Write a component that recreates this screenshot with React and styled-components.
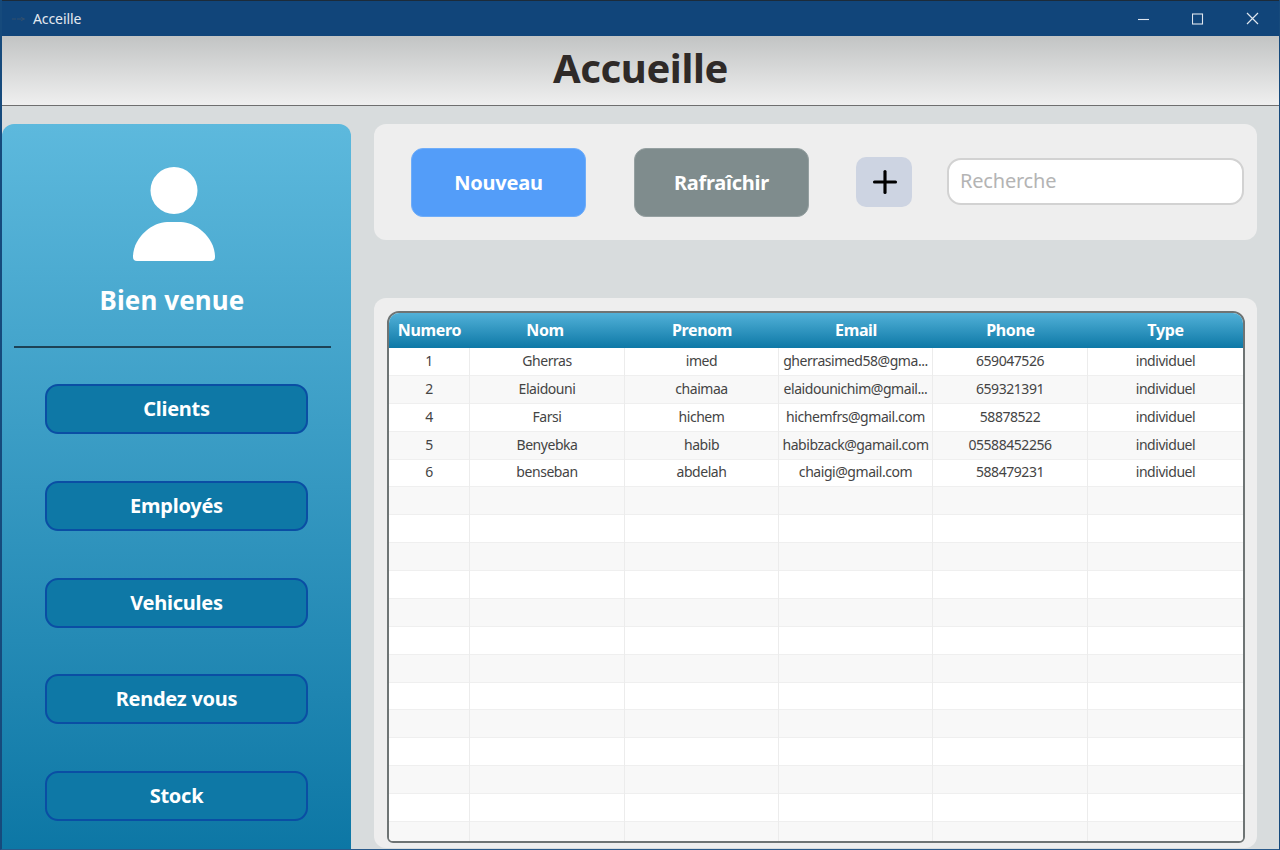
import React from "react";
import styled, { createGlobalStyle } from "styled-components";
import { Plus } from "lucide-react";

const Global = createGlobalStyle`
  html, body { margin: 0; padding: 0; background: #d8dcdd; }
  * { box-sizing: border-box; }
  body { font-family: "Noto Sans", "Open Sans", "Liberation Sans", sans-serif; overflow: hidden; }
`;

const Win = styled.div`
  width: 1280px; height: 850px; overflow: hidden;
  display: flex; flex-direction: column;
  background: #d8dcdd;
  border-left: 2px solid #164a7c;
  border-right: 1px solid #164a7c;
  border-bottom: 1px solid #2a5a8a;
`;
const TitleBar = styled.div`
  height: 36px; flex: none; margin-left: -2px; margin-right: -1px;
  display: flex; align-items: center;
  background: #11457a; border-top: 1px solid #1c2b3a;
  color: #e3e9f0; font-size: 14px; padding: 0 1px 0 12px;
`;
const AppGlyph = styled.svg`
  width: 13px; height: 6px; flex: none; margin-right: 8px;
`;
const TitleText = styled.span`
  flex: 1; letter-spacing: -0.1px;
`;
const WinBtn = styled.div`
  width: 54px; height: 35px; display: flex; align-items: center; justify-content: center;
  color: #dfe6ee;
`;
const Header = styled.header`
  height: 70px; flex: none;
  display: flex; align-items: center; justify-content: center;
  background: linear-gradient(#c2c4c4, #efefef);
  border-bottom: 1px solid #6f6f6f;
`;
const PageTitle = styled.h1`
  margin: 0 0 6px; font-size: 40px; font-weight: 700; color: #2f2a28; letter-spacing: -0.4px;
`;
const Body = styled.div`
  flex: 1; min-height: 0; display: flex; gap: 23px;
  padding: 18px 22px 0 0;
`;
const Sidebar = styled.aside`
  width: 349px; flex: none;
  border-radius: 12px 12px 0 0;
  background: linear-gradient(#5db9dd, #0d77a5);
  display: flex; flex-direction: column; align-items: flex-start;
  padding-top: 43px;
`;
const Avatar = styled.svg`
  width: 82px; height: 94px; margin-left: 131px; display: block; fill: #fff;
`;
const Welcome = styled.h2`
  margin: 21px 0 0; width: 340px; text-align: center;
  font-size: 26px; line-height: 36px; font-weight: 700; color: #fff; letter-spacing: 0.1px;
`;
const Divider = styled.hr`
  margin: 28px 0 0 12px; width: 317px; height: 2px; border: 0; background: #1d4256;
`;
const Nav = styled.nav`
  margin: 36px 0 0 43px; display: flex; flex-direction: column; gap: 46.75px;
`;
const NavButton = styled.button`
  width: 263px; height: 50px; border: 2.5px solid #0a4ea4; border-radius: 13px;
  background: #0e78a6; color: #fff; font: 700 20px "Noto Sans", sans-serif;
  letter-spacing: -0.25px; padding: 0 0 1px;
`;
const Main = styled.main`
  flex: 1; min-width: 0; display: flex; flex-direction: column; gap: 58px;
`;
const Toolbar = styled.section`
  height: 116px; flex: none; background: #eeeeee; border-radius: 12px;
  display: flex; align-items: center; padding-left: 37px;
`;
const ActionButton = styled.button`
  width: 175px; height: 69px; border-radius: 12px; flex: none; margin-right: ${p => p.$gap}px;
  background: ${p => p.$bg}; border: 1px solid ${p => p.$line};
  color: #fff; font: 700 20px "Noto Sans", sans-serif; letter-spacing: -0.25px; padding: 0;
`;
const AddButton = styled.button`
  width: 56px; height: 50px; border: 0; border-radius: 10px; background: #cdd4e2; flex: none;
  display: flex; align-items: center; justify-content: center; padding: 0 0 0 2px; margin-right: 35px; color: #000;
`;
const Search = styled.input`
  width: 297px; height: 47px; flex: none; margin-bottom: 1px;
  border: 2px solid #d2d2d2; border-radius: 14px; background: #fff;
  font: 400 20px "Noto Sans", sans-serif; padding: 0 11px 2px; letter-spacing: -0.2px;
  &::placeholder { color: #b4b4b4; opacity: 1; }
`;
const TableCard = styled.section`
  height: 550px; flex: none; background: #eeeeee; border-radius: 12px;
  padding: 13px 12px 5px 13px; display: flex;
`;
const Frame = styled.div`
  flex: 1; min-width: 0; border: 2px solid #6e7474; border-radius: 12px 12px 6px 6px; overflow: hidden; background: #fff;
`;
const grid = "81px 155px 154px 154px 155px 155px";
const HeadRow = styled.div`
  height: 35px; display: grid; grid-template-columns: ${grid};
  background: linear-gradient(#52b1d8, #0d78a6);
`;
const HeadCell = styled.div`
  display: flex; align-items: center; justify-content: center;
  color: #fff; font-size: 16px; font-weight: 700; letter-spacing: -0.35px; padding-bottom: 2px;
  &:nth-child(2) { padding-right: 5px; }
`;
const Row = styled.div`
  height: 27.88px; display: grid; grid-template-columns: ${grid};
  background: ${p => (p.$alt ? "#f8f8f8" : "#fff")};
  box-shadow: inset 0 -1px 0 #efefef;
`;
const Cell = styled.div`
  display: flex; align-items: center; justify-content: center; white-space: nowrap;
  font-size: 14px; color: #444444; letter-spacing: -0.45px; padding-bottom: 3px;
  border-right: 1px solid #ececec;
  &:last-child { border-right: 0; }
`;

const columns = ["Numero", "Nom", "Prenom", "Email", "Phone", "Type"];
const rows = [
  ["1", "Gherras", "imed", "gherrasimed58@gma...", "659047526", "individuel"],
  ["2", "Elaidouni", "chaimaa", "elaidounichim@gmail...", "659321391", "individuel"],
  ["4", "Farsi", "hichem", "hichemfrs@gmail.com", "58878522", "individuel"],
  ["5", "Benyebka", "habib", "habibzack@gamail.com", "05588452256", "individuel"],
  ["6", "benseban", "abdelah", "chaigi@gmail.com", "588479231", "individuel"],
];
const filled = [...rows, ...Array.from({ length: 13 }, () => ["", "", "", "", "", ""])];
const navItems = ["Clients", "Employés", "Vehicules", "Rendez vous", "Stock"];

export default function App() {
  return (
    <Win>
      <Global />
      <TitleBar>
        <AppGlyph viewBox="0 0 13 6"><path d="M0 3h4M5 3h4M9 1.5l3 1.5-3 1.5" stroke="#33506e" strokeWidth="1.2" fill="none" /></AppGlyph>
        <TitleText>Acceille</TitleText>
        <WinBtn><svg width="12" height="12" viewBox="0 0 12 12"><path d="M0 6.5h11" stroke="currentColor" strokeWidth="1.1" /></svg></WinBtn>
        <WinBtn><svg width="12" height="12" viewBox="0 0 12 12"><rect x="0.5" y="1" width="10" height="10" fill="none" stroke="currentColor" strokeWidth="1.1" /></svg></WinBtn>
        <WinBtn><svg width="13" height="13" viewBox="0 0 13 13"><path d="M1 1l11 11M12 1L1 12" stroke="currentColor" strokeWidth="1.2" /></svg></WinBtn>
      </TitleBar>
      <Header><PageTitle>Accueille</PageTitle></Header>
      <Body>
        <Sidebar>
          <Avatar viewBox="0 0 82 94">
            <circle cx="41" cy="23.5" r="23.5" />
            <path d="M4 94H78Q82 94 82 90C82 70 62 55 48 55H34C20 55 0 70 0 90Q0 94 4 94Z" />
          </Avatar>
          <Welcome>Bien venue</Welcome>
          <Divider />
          <Nav>{navItems.map(n => <NavButton key={n}>{n}</NavButton>)}</Nav>
        </Sidebar>
        <Main>
          <Toolbar>
            <ActionButton $bg="#539df9" $line="#6fadf9" $gap={48}>Nouveau</ActionButton>
            <ActionButton $bg="#7f8c8d" $line="#95a0a1" $gap={47}>Rafraîchir</ActionButton>
            <AddButton aria-label="Ajouter"><Plus size={36} strokeWidth={2.1} /></AddButton>
            <Search placeholder="Recherche" />
          </Toolbar>
          <TableCard>
            <Frame>
              <HeadRow>{columns.map(c => <HeadCell key={c}>{c}</HeadCell>)}</HeadRow>
              {filled.map((r, i) => (
                <Row key={i} $alt={i % 2 === 1}>
                  {r.map((v, j) => <Cell key={j}>{v}</Cell>)}
                </Row>
              ))}
            </Frame>
          </TableCard>
        </Main>
      </Body>
    </Win>
  );
}
